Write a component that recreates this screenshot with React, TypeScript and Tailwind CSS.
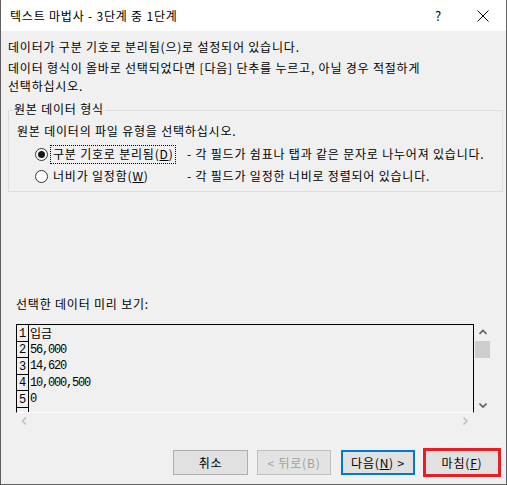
const KR = "font-['Noto_Sans_CJK_KR','Noto_Sans',sans-serif]";
const MONO = "font-['Liberation_Mono','Noto_Sans_CJK_KR',monospace]";

function Chevron({ dir, color = "#606060" }: { dir: "up" | "down" | "left" | "right"; color?: string }) {
  const pts: Record<string, string> = {
    up: "0.5,5 4,1.5 7.5,5",
    down: "0.5,1.5 4,5 7.5,1.5",
    left: "5,0.5 1.5,4 5,7.5",
    right: "1.5,0.5 5,4 1.5,7.5",
  };
  const vertical = dir === "up" || dir === "down";
  return (
    <svg
      width={vertical ? 8 : 7}
      height={vertical ? 7 : 8}
      viewBox={vertical ? "0 0 8 7" : "0 0 7 8"}
      fill="none"
    >
      <polyline points={pts[dir]} stroke={color} strokeWidth="1.6" />
    </svg>
  );
}

function Radio({ checked }: { checked?: boolean }) {
  return (
    <span className="flex h-[13px] w-[13px] shrink-0 items-center justify-center rounded-full border border-[#333333] bg-white">
      {checked && <span className="h-[7px] w-[7px] rounded-full bg-[#1a1a1a]" />}
    </span>
  );
}

const rows = ["입금", "56,000", "14,620", "10,000,500", "0", ""];

export default function App() {
  return (
    <div className={`${KR} h-[485px] w-[507px] border-x border-b border-[#5f5f5f] bg-[#f0f0f0] text-[12px] leading-[18px] tracking-[0.8px] text-black`}>
      {/* title bar */}
      <div className="flex h-[31px] items-center bg-white pl-[9px]">
        <span className="flex-1">텍스트 마법사 - 3단계 중 1단계</span>
        <span className="mr-[35px] text-[13px]">?</span>
        <svg width="12" height="12" viewBox="0 0 12 12" className="mr-[17px]">
          <path d="M0.5 0.5 L11.5 11.5 M11.5 0.5 L0.5 11.5" stroke="#000" strokeWidth="1" />
        </svg>
      </div>

      <div className="flex flex-col pl-[7px] pt-[7px]">
        <p>데이터가 구분 기호로 분리됨(으)로 설정되어 있습니다.</p>
        <p className="mt-[3px]">
          데이터 형식이 올바로 선택되었다면 [다음] 단추를 누르고, 아닐 경우 적절하게
          <br />
          선택하십시오.
        </p>

        {/* group box */}
        <div className="relative mt-[15px] h-[82px] w-[495px] border border-[#dcdcdc] pl-[8px] pt-[11px]">
          <span className="absolute left-[4px] top-[-11px] bg-[#f0f0f0] px-[1px]">원본 데이터 형식</span>
          <p>원본 데이터의 파일 유형을 선택하십시오.</p>
          <div className="mt-[3px] flex h-[22px] items-center">
            <span className="ml-[18px]">
              <Radio checked />
            </span>
            <span className="ml-[2px] w-[137px] shrink-0">
              <span className="inline-flex h-[19px] items-center border border-dotted border-black px-[2px]">
                구분 기호로 분리됨(<u>D</u>)
              </span>
            </span>
            <span className="whitespace-nowrap">- 각 필드가 쉼표나 탭과 같은 문자로 나누어져 있습니다.</span>
          </div>
          <div className="flex h-[22px] items-center">
            <span className="ml-[18px]">
              <Radio />
            </span>
            <span className="ml-[2px] w-[137px] shrink-0">
              <span className="inline-flex h-[19px] items-center border border-transparent px-[2px]">
                너비가 일정함(<u>W</u>)
              </span>
            </span>
            <span className="whitespace-nowrap">- 각 필드가 일정한 너비로 정렬되어 있습니다.</span>
          </div>
        </div>

        <p className="ml-[8px] mt-[103px]">선택한 데이터 미리 보기:</p>

        {/* preview */}
        <div className="ml-[8px] mt-[11px] flex h-[89px]">
          <div className="w-[458px] overflow-hidden border-x border-t border-b border-x-black border-t-black border-b-white bg-[#f0f0f0]">
            {rows.map((r, i) => (
              <div key={i} className="flex h-[16.5px]">
                <div className={`${MONO} flex w-[12px] shrink-0 items-end justify-center border-b border-r border-black text-[12px] leading-[13px] tracking-normal`}>
                  {i < 5 ? i + 1 : ""}
                </div>
                <div className={`${MONO} flex items-center pl-[1px] text-[12px] leading-[16px] tracking-[-1.2px]`}>
                  {i === 0 ? <span className={`${KR} text-[12px] tracking-normal`}>{r}</span> : r}
                </div>
              </div>
            ))}
          </div>
          <div className="flex w-[17px] flex-col items-center">
            <div className="flex h-[17px] items-center justify-center">
              <Chevron dir="up" />
            </div>
            <div className="h-[17px] w-[15px] bg-[#cdcdcd]" />
            <div className="flex-1" />
            <div className="flex h-[16px] items-center justify-center">
              <Chevron dir="down" />
            </div>
          </div>
        </div>
        <div className="ml-[8px] flex h-[16px] w-[458px] items-center justify-between pl-[5px] pr-[5px]">
          <Chevron dir="left" color="#c0c0c0" />
          <Chevron dir="right" color="#c0c0c0" />
        </div>

        {/* buttons */}
        <div className="mt-[19px] flex h-[29px] items-center justify-end pr-[5px]">
          <button className="flex h-[25px] w-[75px] items-center justify-center border border-[#adadad] bg-[#e1e1e1]">
            취소
          </button>
          <button className="ml-[9px] flex h-[25px] w-[74px] items-center justify-center border border-[#bfbfbf] bg-[#e3e3e3] text-[#a0a0a0]">
            &lt; 뒤로(B)
          </button>
          <button className="ml-[10px] flex h-[25px] w-[74px] items-center justify-center border-2 border-[#0078d7] bg-[#e1e1e1]">
            다음(<u>N</u>) &gt;
          </button>
          <button className="ml-[8px] flex h-[29px] w-[78px] items-center justify-center border-[3px] border-[#ec1c24] bg-[#e1e1e1]">
            마침(<u>F</u>)
          </button>
        </div>
      </div>
    </div>
  );
}
